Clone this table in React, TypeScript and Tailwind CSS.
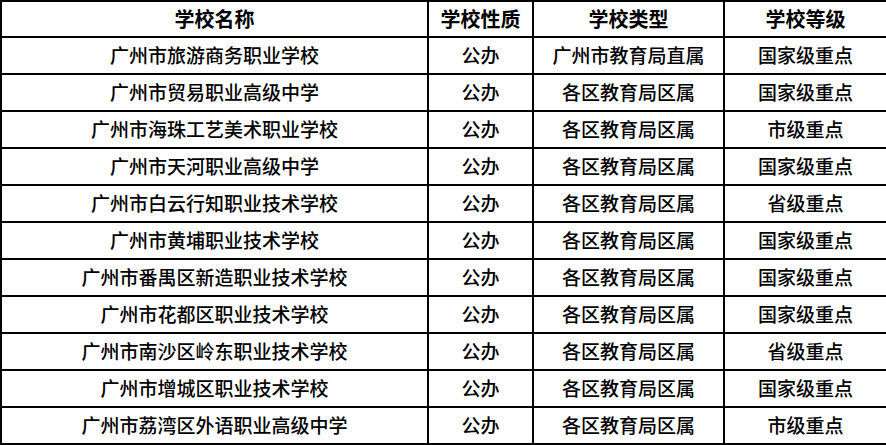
const rows: [string, string, string, string][] = [
  ["广州市旅游商务职业学校", "公办", "广州市教育局直属", "国家级重点"],
  ["广州市贸易职业高级中学", "公办", "各区教育局区属", "国家级重点"],
  ["广州市海珠工艺美术职业学校", "公办", "各区教育局区属", "市级重点"],
  ["广州市天河职业高级中学", "公办", "各区教育局区属", "国家级重点"],
  ["广州市白云行知职业技术学校", "公办", "各区教育局区属", "省级重点"],
  ["广州市黄埔职业技术学校", "公办", "各区教育局区属", "国家级重点"],
  ["广州市番禺区新造职业技术学校", "公办", "各区教育局区属", "国家级重点"],
  ["广州市花都区职业技术学校", "公办", "各区教育局区属", "国家级重点"],
  ["广州市南沙区岭东职业技术学校", "公办", "各区教育局区属", "省级重点"],
  ["广州市增城区职业技术学校", "公办", "各区教育局区属", "国家级重点"],
  ["广州市荔湾区外语职业高级中学", "公办", "各区教育局区属", "市级重点"],
];

const headers = ["学校名称", "学校性质", "学校类型", "学校等级"];

export default function App() {
  return (
    <div
      className="w-[886px] h-[445px] bg-white overflow-hidden"
      style={{ fontFamily: '"Noto Sans CJK SC", "Noto Sans", sans-serif' }}
    >
      <table className="w-[886px] table-fixed border-collapse border-2 border-black text-black">
        <colgroup>
          <col className="w-[427px]" />
          <col className="w-[105px]" />
          <col className="w-[191px]" />
          <col className="w-[163px]" />
        </colgroup>
        <thead>
          <tr className="h-[36px]">
            {headers.map((h) => (
              <th key={h} className="border-2 border-black p-0 text-center text-[20px] font-bold leading-none">
                {h}
              </th>
            ))}
          </tr>
        </thead>
        <tbody>
          {rows.map((r) => (
            <tr key={r[0]} className="h-[37px]">
              {r.map((c, i) => (
                <td key={i} className="border-2 border-black p-0 pb-[2px] text-center text-[19px] font-medium leading-none">
                  {c}
                </td>
              ))}
            </tr>
          ))}
        </tbody>
      </table>
    </div>
  );
}
